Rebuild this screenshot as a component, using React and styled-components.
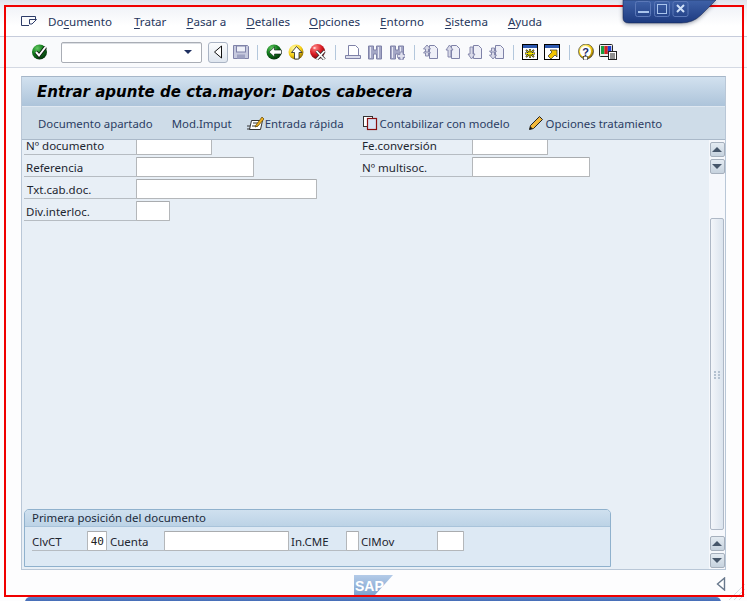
import React from "react";
import styled, { createGlobalStyle } from "styled-components";

const Global = createGlobalStyle`
  html, body { margin: 0; padding: 0; background: #fdfdfe; }
  * { box-sizing: border-box; }
`;
const FONT = `"Noto Sans", "Open Sans", "DejaVu Sans", sans-serif`;

const Page = styled.div`
  position: relative; width: 747px; height: 601px; overflow: hidden;
  display: flex; flex-direction: column; background: #fdfdfe;
  font-family: ${FONT}; font-size: 11.5px; color: #1f2733;
`;
const RedFrame = styled.div`
  position: absolute; left: 4px; top: 5px; width: 740px; height: 592px;
  border: 2px solid #f00000; pointer-events: none; z-index: 2;
`;
const WindowControls = styled.svg`
  position: absolute; left: 620px; top: 0; z-index: 3;
  filter: drop-shadow(0 1px 2px rgba(20, 30, 60, .45));
`;
const MenuBar = styled.div`
  height: 37px; display: flex; align-items: center; padding: 7px 0 0 21px;
  border-bottom: 1px solid #c6ccdb;
  background: linear-gradient(#dfe3ec 0, #f3f5f9 10px, #ffffff 26px);
`;
const MenuIcon = styled.svg`margin-right: 11px; flex: none;`;
const MenuItem = styled.span`
  color: #26365c; font-size: 11.6px; margin-right: ${p => p.$gap}px; white-space: nowrap;
  u { text-underline-offset: 2px; text-decoration-thickness: 1px; }
`;
const Toolbar = styled.div`
  height: 31px; display: flex; align-items: center; padding-left: 29px;
  border-bottom: 1px solid #d4d9e3; background: #f9fafc;
`;
const Slot = styled.span`
  width: 22px; height: 18px; flex: none; display: flex; align-items: center; justify-content: center;
`;
const SaveSlot = styled(Slot)`margin-left: 2px;`;
const Sep = styled.span`
  width: 1px; height: 15px; flex: none; background: #b3c7dc;
  margin-left: ${p => p.$l}px; margin-right: ${p => p.$r}px;
`;
const Combo = styled.div`
  width: 141px; height: 21px; margin-left: 10px; flex: none; position: relative;
  background: #fff; border: 1px solid #a9adb5; border-radius: 2px; box-shadow: inset 0 1px 0 #dcdfe4;
  &::after {
    content: ""; position: absolute; right: 9px; top: 7px;
    border-left: 4px solid transparent; border-right: 4px solid transparent; border-top: 4px solid #1e2f60;
  }
`;
const BackButton = styled.span`
  width: 20px; height: 21px; margin-left: 6px; flex: none;
  display: flex; align-items: center; justify-content: center;
  border: 1px solid #aab4c4; border-radius: 3px;
  background: linear-gradient(#fbfcfd, #dfe6ef);
`;
const Body = styled.div`
  flex: 1; min-height: 0; padding: 8px 21px 0 21px; display: flex; flex-direction: column;
`;
const Panel = styled.div`
  height: 494px; display: flex; flex-direction: column; flex: none;
  border: 1px solid #b9c7d7; border-top-color: #a6b6c8; background: #e8eff6;
`;
const TitleBar = styled.div`
  height: 30px; flex: none; display: flex; align-items: center; padding-left: 15px;
  background: linear-gradient(#d2e1ef, #adc4da); border-bottom: 1px solid #dfe8f1;
  font-family: "DejaVu Sans", Verdana, sans-serif; font-weight: 700; font-style: italic;
  font-size: 15px; color: #000; white-space: nowrap;
`;
const AppToolbar = styled.div`
  height: 33px; flex: none; display: flex; align-items: center; padding-left: 16px;
  background: #cedce8; border-bottom: 1px solid #aab9c9;
`;
const AppButton = styled.span`
  display: flex; align-items: center; color: #2b3d63; font-size: 11.4px; white-space: nowrap;
  margin-right: ${p => p.$gap}px;
  svg { flex: none; margin-right: 1px; }
`;
const Content = styled.div`flex: 1; min-height: 0; display: flex;`;
const FormArea = styled.div`
  flex: 1; min-width: 0; overflow: hidden; display: flex; flex-direction: column; padding: 0 0 2px 2px;
`;
const Fields = styled.div`
  margin-top: -5px; display: grid; grid-template-columns: 336px 1fr; grid-auto-rows: 22px;
`;
const FieldRow = styled.div`display: flex; height: 20px; align-items: stretch;`;
const Label = styled.span`
  width: ${p => p.$w}px; flex: none; display: flex; align-items: center; padding: 1px 0 0 ${p => p.$pad ?? 2}px;
  border-bottom: 1px solid #b6bcc2; color: #1d2630; font-size: 11.5px; white-space: nowrap; height: 20px;
`;
const Input = styled.span`
  width: ${p => p.$w}px; height: 20px; flex: none; background: #fff;
  border: 1px solid #b4b7ba; border-top-color: #a9acaf; border-radius: 1px;
  font-family: "DejaVu Sans Mono", monospace; font-size: 11px; color: #222;
  display: flex; align-items: center; justify-content: flex-end; padding-right: 2px;
`;
const Group = styled.div`
  margin-top: auto; width: 587px; height: 58px; flex: none;
  border: 1px solid #8fb1cd; border-radius: 5px 5px 0 0; background: #dde9f4;
  display: flex; flex-direction: column;
`;
const GroupHeader = styled.div`
  height: 17px; flex: none; padding-left: 7px; line-height: 15px; font-size: 11.4px; color: #1c2a3a;
  border-radius: 4px 4px 0 0; background: linear-gradient(#cfe0ef, #bcd3e6); border-bottom: 1px solid #a8c3da;
`;
const GroupRow = styled.div`display: flex; margin: 4px 0 0 7px;`;
const ScrollBar = styled.div`
  width: 16px; flex: none; display: flex; flex-direction: column; align-items: center;
  padding-top: 2px; background: #f6f8fc;
`;
const ScrollBtn = styled.span`
  width: 15px; height: 15px; flex: none; margin-bottom: ${p => p.$mb ?? 0}px;
  display: flex; align-items: center; justify-content: center;
  border: 1px solid #a6b0bd; border-radius: 2px; background: linear-gradient(#e4ebf2, #c6d2de);
  &::after {
    content: ""; border-left: 5px solid transparent; border-right: 5px solid transparent;
    ${p => p.$up ? "border-bottom: 5px solid #46566a;" : "border-top: 5px solid #46566a;"}
  }
`;
const Thumb = styled.span`
  width: 14px; height: 312px; margin: 44px 0 6px; flex: none; padding-top: 2px;
  border: 1px solid #aeb8c6; border-radius: 2px; background: linear-gradient(90deg, #f3f6fa, #dbe4ee);
  display: flex; align-items: center; justify-content: center;
`;
const Grip = styled.svg`display: block;`;
const Footer = styled.div`
  flex: 1; min-height: 0; position: relative; display: flex; justify-content: center; padding: 5px 1px 0 0;
`;
const ResizeArrow = styled.svg`position: absolute; left: 695px; top: 7px;`;
const BottomBar = styled.div`
  position: absolute; left: 25px; top: 597px; width: 696px; height: 6px; border-radius: 5px 5px 0 0;
  background: linear-gradient(#5d82c4, #3a62b0);
`;
const CornerGrip = styled.svg`position: absolute; left: 727px; top: 583px; z-index: 1;`;

const DIS = "#7f82a8";
const I = ({ w = 16, h = 16, children }) => (
  <svg width={w} height={h} viewBox={`0 0 ${w} ${h}`} shapeRendering="geometricPrecision">{children}</svg>
);
const Defs = () => (
  <svg width="0" height="0" style={{ position: "absolute" }}>
    <defs>
      <radialGradient id="gG" cx=".35" cy=".25" r=".9"><stop offset="0" stopColor="#62c860" /><stop offset=".45" stopColor="#107a1c" /><stop offset="1" stopColor="#021a06" /></radialGradient>
      <radialGradient id="gY" cx=".35" cy=".25" r=".9"><stop offset="0" stopColor="#fff9a0" /><stop offset=".55" stopColor="#f5cc10" /><stop offset="1" stopColor="#5a3c00" /></radialGradient>
      <radialGradient id="gR" cx=".35" cy=".25" r=".9"><stop offset="0" stopColor="#ff8a8a" /><stop offset=".5" stopColor="#d81820" /><stop offset="1" stopColor="#3a0206" /></radialGradient>
      <linearGradient id="sapG" x1="0" y1="0" x2="0" y2="1"><stop offset="0" stopColor="#b4cbe8" /><stop offset="1" stopColor="#7ea3d0" /></linearGradient>
      <linearGradient id="winG" x1="0" y1="0" x2="0" y2="1"><stop offset="0" stopColor="#3f62a8" /><stop offset="1" stopColor="#1d3a80" /></linearGradient>
    </defs>
  </svg>
);
const Check = () => <I><circle cx="7.5" cy="8" r="7.5" fill="url(#gG)" /><path d="M4 8l3 3.5L13.5 3" fill="none" stroke="#111" strokeWidth="3.6" /><path d="M4 8l3 3.5L13.5 3" fill="none" stroke="#fff" strokeWidth="2" /></I>;
const GoBack = () => <I><circle cx="8" cy="8" r="7.5" fill="url(#gG)" /><path d="M3 8L8.5 3v3H15.5v4H8.5v3z" fill="#fff" stroke="#0a1a10" strokeWidth=".6" /></I>;
const GoUp = () => <I><circle cx="8" cy="8" r="7.5" fill="url(#gY)" /><path d="M8.5 2.5l5.5 6h-3v6.5H6.5V8.5h-3z" fill="#fff" stroke="#222" strokeWidth=".8" /></I>;
const Cancel = () => <I><circle cx="7.5" cy="7.5" r="7.5" fill="url(#gR)" /><path d="M6.5 7l8 8.5M14.5 7l-8 8.5" stroke="#333" strokeWidth="3.2" /><path d="M6.5 7l8 8.5M14.5 7l-8 8.5" stroke="#fff" strokeWidth="1.8" /><rect x="3.5" y="3" width="2" height="2" fill="#ffd0d0" /></I>;
const Save = () => <I><path d="M.5 1.5h14l1 1v12h-15z" fill="#c6c9de" stroke={DIS} /><rect x="3.5" y="2" width="9" height="6" fill="#eef0f8" stroke={DIS} /><rect x="4" y="10.5" width="8" height="4" fill="#9ea2c2" /></I>;
const Print = () => <I><path d="M3.5 1.5h7l3 3v7h-10z" fill="#fff" stroke={DIS} /><path d="M.5 11.5h15v3H.5z" fill="#dcdeec" stroke={DIS} /></I>;
const Find = ({ plus }) => (
  <I>
    <path d="M1.5 2h5v4h3V2h5v13h-5v-5h-3v5h-5z" fill="#a4a7c6" stroke={DIS} />
    <path d="M3.5 3v11M11.5 3v11" stroke="#e8e9f4" />
    {plus && <path d="M11 8h3v2.5h2v3h-2V16h-3v-2.5H8.5v-3H11z" fill="#e0e1ee" stroke={DIS} strokeWidth=".8" />}
  </I>
);
const Page1 = () => <path d="M6.5 1.5h5l3 3v10h-8z" fill="#eeeff7" stroke={DIS} />;
const Up = ({ y = 0 }) => <path transform={`translate(0 ${y})`} d="M.5 5l3.5-4 3.5 4H5.5v3h-3V5z" fill="#d8d9e8" stroke={DIS} strokeWidth=".9" />;
const Down = ({ y = 0 }) => <path transform={`translate(0 ${y})`} d="M.5 11l3.5 4 3.5-4H5.5V8h-3v3z" fill="#d8d9e8" stroke={DIS} strokeWidth=".9" />;
const PageFirst = () => <I><Page1 /><Up y={4} /><Up /></I>;
const PagePrev = () => <I><Page1 /><path d="M1 6l3.5-5L8 6H6v7H3V6z" fill="#d8d9e8" stroke={DIS} strokeWidth=".9" /></I>;
const PageNext = () => <I><Page1 /><path d="M1 10l3.5 5L8 10H6V3H3v7z" fill="#d8d9e8" stroke={DIS} strokeWidth=".9" /></I>;
const PageLast = () => <I><Page1 /><Down y={-4} /><Down /></I>;
const Gen = () => <I><rect x=".5" y=".5" width="15" height="15" fill="#fff" stroke="#000" /><rect x="1" y="1" width="14" height="3" fill="#2c58b0" /><path d="M8 5v9M3 9.5h10M4 6l8 7M12 6l-8 7" stroke="#222" strokeWidth="1.8" /><path d="M8 5.5v8M3.5 9.5h9M4.5 6.5l7 6M11.5 6.5l-7 6" stroke="#f5e800" strokeWidth="1" /></I>;
const Shortcut = () => <I><rect x=".5" y=".5" width="15" height="15" fill="#fff" stroke="#000" /><rect x="1" y="1" width="14" height="3" fill="#2c58b0" /><path d="M4 12l4-4-2-2h7v7l-2-2-4 4z" fill="#f2c500" stroke="#333" strokeWidth=".7" /></I>;
const Help = () => <I><circle cx="8" cy="7.5" r="7.5" fill="url(#gY)" stroke="#222" strokeWidth=".6" /><circle cx="7.5" cy="7.5" r="5.5" fill="#fff" /><text x="7.5" y="11.5" textAnchor="middle" fontSize="11" fontWeight="700" fontFamily="Liberation Sans" fill="#1a2a70">?</text><rect x="5.5" y="12.5" width="4" height="3.5" fill="#fff" stroke="#222" strokeWidth=".6" /></I>;
const Layout = () => <I w={18} h={16}><rect x=".5" y=".5" width="13" height="12" rx="1" fill="#eee" stroke="#222" /><rect x="2" y="2" width="3.4" height="8" fill="#1aa040" /><rect x="5.4" y="2" width="3.4" height="8" fill="#d82020" /><rect x="8.8" y="2" width="3.4" height="8" fill="#2040d0" /><rect x="9.5" y="7.5" width="8" height="8" fill="#fff" stroke="#222" /><path d="M11 10h5M11 12h5M11 14h5" stroke="#222" /></I>;
const Quick = () => <I w={17} h={16}><path d="M4.5 5.5h11l-2 9h-11z" fill="#fff" stroke="#333" /><path d="M6 8h6M5 11h6M0 11h3M0 14h3" stroke="#333" /><path d="M9 10l6-8 2 2-6 7-3 1z" fill="#f0b020" stroke="#5a4000" strokeWidth=".7" /></I>;
const Copy = () => <I w={16} h={16}><rect x=".5" y="1.5" width="9" height="10" fill="#fff" stroke="#333" /><rect x="4.5" y="3.5" width="9" height="11" fill="#d6e4f6" stroke="#8a1010" strokeWidth="1.2" /></I>;
const Pencil = () => <I w={17} h={16}><path d="M1.5 14.5l1-4L11.5 1.5l3 3-9 9z" fill="#f2b83a" stroke="#222" /><path d="M1.5 14.5l1-3 2 2z" fill="#111" /></I>;

const MENUS = [
  [<><span>Do</span><u>c</u><span>umento</span></>, 22],
  [<><u>T</u><span>ratar</span></>, 20],
  [<><u>P</u><span>asar a</span></>, 20],
  [<><u>D</u><span>etalles</span></>, 19],
  [<><u>O</u><span>pciones</span></>, 20],
  [<><u>E</u><span>ntorno</span></>, 21],
  [<><u>S</u><span>istema</span></>, 20],
  [<><u>A</u><span>yuda</span></>, 0],
];

export default function App() {
  return (
    <Page>
      <Global />
      <Defs />
      <RedFrame />
      <WindowControls width="110" height="28" viewBox="0 0 110 28">
        <path d="M3 0v18q0 5 6 5h52q12 0 20-8L96 0z" fill="url(#winG)" stroke="#10204a" strokeWidth=".5" />
        <g fill="none" stroke="#5b78b8"><rect x="15.5" y="1.5" width="15" height="15" rx="2" /><rect x="34.5" y="1.5" width="15" height="15" rx="2" /><rect x="53" y="1.5" width="15" height="15" rx="2" /></g>
        <rect x="18" y="11" width="11" height="2" fill="#a9c4ec" />
        <rect x="37.5" y="4.5" width="9" height="9" fill="none" stroke="#a9c4ec" />
        <path d="M57 5l7 7M64 5l-7 7" stroke="#cfe0f8" strokeWidth="2" />
      </WindowControls>

      <MenuBar>
        <MenuIcon width="16" height="14" viewBox="0 0 16 14"><path d="M.5 1.5h14v3M8 10.5H.5v-9" fill="none" stroke="#2c3b68" /><path d="M8.5 4.5h7L11 9H8.5z" fill="none" stroke="#2c3b68" /></MenuIcon>
        {MENUS.map(([t, g], i) => <MenuItem key={i} $gap={g}>{t}</MenuItem>)}
      </MenuBar>

      <Toolbar>
        <Slot><Check /></Slot>
        <Combo />
        <BackButton><svg width="10" height="14" viewBox="0 0 10 14"><path d="M8.5 1L1.5 7l7 6z" fill="#fff" stroke="#111" /></svg></BackButton>
        <SaveSlot><Save /></SaveSlot>
        <Sep $l={5} $r={5} />
        <Slot><GoBack /></Slot><Slot><GoUp /></Slot><Slot><Cancel /></Slot>
        <Sep $l={6} $r={6} />
        <Slot><Print /></Slot><Slot><Find /></Slot><Slot><Find plus /></Slot>
        <Sep $l={6} $r={5} />
        <Slot><PageFirst /></Slot><Slot><PagePrev /></Slot><Slot><PageNext /></Slot><Slot><PageLast /></Slot>
        <Sep $l={5} $r={5} />
        <Slot><Gen /></Slot><Slot><Shortcut /></Slot>
        <Sep $l={6} $r={5} />
        <Slot><Help /></Slot><Slot><Layout /></Slot>
      </Toolbar>

      <Body>
        <Panel>
          <TitleBar>Entrar apunte de cta.mayor: Datos cabecera</TitleBar>
          <AppToolbar>
            <AppButton $gap={19}>Documento apartado</AppButton>
            <AppButton $gap={15}>Mod.Imput</AppButton>
            <AppButton $gap={19}><Quick />Entrada rápida</AppButton>
            <AppButton $gap={18}><Copy />Contabilizar con modelo</AppButton>
            <AppButton $gap={0}><Pencil />Opciones tratamiento</AppButton>
          </AppToolbar>
          <Content>
            <FormArea>
              <Fields>
                <FieldRow><Label $w={112}>Nº documento</Label><Input $w={76} /></FieldRow>
                <FieldRow><Label $w={112}>Fe.conversión</Label><Input $w={76} /></FieldRow>
                <FieldRow><Label $w={112}>Referencia</Label><Input $w={118} /></FieldRow>
                <FieldRow><Label $w={112}>Nº multisoc.</Label><Input $w={118} /></FieldRow>
                <FieldRow><Label $w={112} $pad={3}>Txt.cab.doc.</Label><Input $w={181} /></FieldRow>
                <div />
                <FieldRow><Label $w={112}>Div.interloc.</Label><Input $w={34} /></FieldRow>
              </Fields>
              <Group>
                <GroupHeader>Primera posición del documento</GroupHeader>
                <GroupRow>
                  <Label $w={55} $pad={0}>ClvCT</Label><Input $w={20}>40</Input>
                  <Label $w={57} $pad={3}>Cuenta</Label><Input $w={125} />
                  <Label $w={57}>In.CME</Label><Input $w={13} />
                  <Label $w={78}>ClMov</Label><Input $w={27} />
                </GroupRow>
              </Group>
            </FormArea>
            <ScrollBar>
              <ScrollBtn $up $mb={2} />
              <ScrollBtn />
              <Thumb>
                <Grip width="6" height="8" viewBox="0 0 6 8"><path d="M0 0h2v2H0zM4 0h2v2H4zM0 3h2v2H0zM4 3h2v2H4zM0 6h2v2H0zM4 6h2v2H4z" fill="#b3c1d0" /></Grip>
              </Thumb>
              <ScrollBtn $up $mb={2} />
              <ScrollBtn />
            </ScrollBar>
          </Content>
        </Panel>
        <Footer>
          <svg width="39" height="20" viewBox="0 0 39 20">
            <path d="M0 0h39L21 20H0z" fill="url(#sapG)" />
            <text x="1" y="15.5" fontFamily="Liberation Sans" fontWeight="700" fontSize="14" fill="#fff">SAP</text>
          </svg>
          <ResizeArrow width="10" height="14" viewBox="0 0 10 14"><path d="M8.5 1L1.5 7l7 6z" fill="#fff" stroke="#68788c" strokeWidth="1.4" /></ResizeArrow>
        </Footer>
      </Body>
      <BottomBar />
      <CornerGrip width="20" height="18" viewBox="0 0 20 18"><path d="M2 17L18 1M7 17L18 6M12 17l6-6" stroke="#d6dce4" /></CornerGrip>
    </Page>
  );
}
